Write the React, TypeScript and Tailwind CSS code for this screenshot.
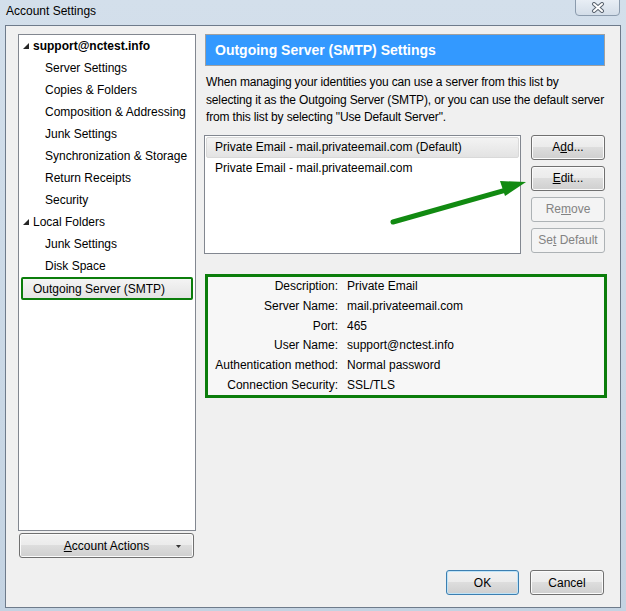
import type { ReactNode } from 'react';

const FONT = { fontFamily: '"Liberation Sans", Arial, sans-serif' };

const treeItems = [
  { label: 'Server Settings', level: 1 },
  { label: 'Copies & Folders', level: 1 },
  { label: 'Composition & Addressing', level: 1 },
  { label: 'Junk Settings', level: 1 },
  { label: 'Synchronization & Storage', level: 1 },
  { label: 'Return Receipts', level: 1 },
  { label: 'Security', level: 1 },
];

const details = [
  ['Description:', 'Private Email'],
  ['Server Name:', 'mail.privateemail.com'],
  ['Port:', '465'],
  ['User Name:', 'support@nctest.info'],
  ['Authentication method:', 'Normal password'],
  ['Connection Security:', 'SSL/TLS'],
];

function Expander() {
  return (
    <svg width="6" height="6" viewBox="0 0 6 6" className="shrink-0">
      <polygon points="6,0 6,6 0,6" fill="#262626" />
    </svg>
  );
}

function WinButton({
  children,
  disabled,
  focused,
  className = '',
}: {
  children: ReactNode;
  disabled?: boolean;
  focused?: boolean;
  className?: string;
}) {
  if (disabled) {
    return (
      <div
        className={`flex h-[25px] items-center justify-center rounded-[3px] border border-[#adb2b5] bg-[#f4f4f4] text-[12px] text-[#838383] ${className}`}
      >
        {children}
      </div>
    );
  }
  return (
    <div
      className={`flex h-[25px] items-center justify-center rounded-[3px] border ${
        focused ? 'border-[#3c7fb1] shadow-[inset_0_0_0_1px_#bfe3f7]' : 'border-[#707070] shadow-[inset_0_0_0_1px_#fbfbfb]'
      } bg-[linear-gradient(to_bottom,#f2f2f2_0%,#ebebeb_50%,#dddddd_50%,#cfcfcf_100%)] text-[12px] text-black ${className}`}
    >
      {children}
    </div>
  );
}

export default function App() {
  return (
    <div
      className="relative flex h-[611px] w-[626px] flex-col overflow-hidden bg-[linear-gradient(to_bottom,#d3dfeb,#c4d3e2)] text-black"
      style={FONT}
    >
      {/* title bar */}
      <div className="flex h-[25px] shrink-0 items-start justify-between pl-[6px] pr-[6px]">
        <span className="mt-[3px] text-[12px] leading-[16px]">Account Settings</span>
        <div className="-mt-px flex h-[17px] w-[45px] items-center justify-center rounded-b-[4px] border border-[#8b9bad] bg-[linear-gradient(to_bottom,#e8eef5,#d3dde8)]">
          <svg width="14" height="11" viewBox="0 0 14 11">
            <path d="M3 2 L11 9 M11 2 L3 9" stroke="#5a6470" strokeWidth="4" strokeLinecap="round" />
            <path d="M3 2 L11 9 M11 2 L3 9" stroke="#ffffff" strokeWidth="2" strokeLinecap="round" />
          </svg>
        </div>
      </div>

      {/* client area */}
      <div className="mx-[5px] mb-[3px] flex flex-1 flex-col border border-[#6e7b8b] bg-[#f0f0f0] pl-[12px] pr-[13px] pt-[8px] pb-[12px]">
        <div className="flex gap-[8px]">
          {/* left column */}
          <div className="flex w-[178px] shrink-0 flex-col">
            <div className="flex h-[497px] flex-col border border-[#828790] bg-white text-[12px]">
              <div className="flex h-[22px] items-center gap-[4px] pl-[4px] font-bold">
                <Expander />
                <span>support@nctest.info</span>
              </div>
              {treeItems.map((item) => (
                <div key={item.label} className="flex h-[22px] items-center pl-[26px]">
                  {item.label}
                </div>
              ))}
              <div className="flex h-[22px] items-center gap-[4px] pl-[4px]">
                <Expander />
                <span>Local Folders</span>
              </div>
              <div className="flex h-[22px] items-center pl-[26px]">Junk Settings</div>
              <div className="flex h-[22px] items-center pl-[26px]">Disk Space</div>
              <div className="mx-[2px] flex h-[23px] items-center rounded-[2px] border-[2px] border-[#0b7d0b] bg-[linear-gradient(to_bottom,#f4f4f4,#e4e4e4)] pl-[10px]">
                Outgoing Server (SMTP)
              </div>
            </div>
            <WinButton className="relative ml-px mt-[2px] w-[175px]">
              <span>
                <span className="underline">A</span>ccount Actions
              </span>
              <svg width="5" height="3" viewBox="0 0 5 3" className="absolute right-[12px] top-[11px]">
                <polygon points="0,0 5,0 2.5,3" fill="#333" />
              </svg>
            </WinButton>
          </div>

          {/* right column */}
          <div className="flex w-[403px] shrink-0 flex-col">
            <div className="ml-px flex h-[32px] w-[400px] items-center border border-[#a0a0a0] bg-[#3399ff] pl-[9px] text-[14px] font-bold text-white">
              Outgoing Server (SMTP) Settings
            </div>
            <p className="mt-[8px] whitespace-nowrap pl-[2px] text-[12px] leading-[17.5px] tracking-[-0.15px]">
              When managing your identities you can use a server from this list by
              <br />
              selecting it as the Outgoing Server (SMTP), or you can use the default server
              <br />
              from this list by selecting "Use Default Server".
            </p>
            <div className="mt-[8px] flex">
              <div className="flex h-[119px] w-[317px] flex-col border border-[#828790] bg-white p-px text-[12px]">
                <div className="flex h-[21px] items-center rounded-[2px] border border-[#d9d9d9] bg-[linear-gradient(to_bottom,#f3f3f3,#e3e3e3)] pl-[8px]">
                  Private Email - mail.privateemail.com (Default)
                </div>
                <div className="flex h-[21px] items-center pl-[9px]">Private Email - mail.privateemail.com</div>
              </div>
              <div className="ml-[10px] flex w-[74px] flex-col gap-[6px]">
                <WinButton>
                  <span>
                    A<span className="underline">d</span>d...
                  </span>
                </WinButton>
                <WinButton>
                  <span>
                    <span className="underline">E</span>dit...
                  </span>
                </WinButton>
                <WinButton disabled>
                  <span>
                    Re<span className="underline">m</span>ove
                  </span>
                </WinButton>
                <WinButton disabled>
                  <span>
                    Se<span className="underline">t</span> Default
                  </span>
                </WinButton>
              </div>
            </div>
            <div className="ml-px mt-[20px] flex h-[124px] w-[402px] flex-col justify-center border-[3px] border-[#0b7d0b] bg-[#f7f7f7] text-[12px]">
              {details.map(([label, value]) => (
                <div key={label} className="flex h-[19.8px] items-center">
                  <span className="w-[130px] text-right">{label}</span>
                  <span className="ml-[9px]">{value}</span>
                </div>
              ))}
            </div>
          </div>
        </div>

        <div className="mr-[3px] mt-auto flex justify-end gap-[11px]">
          <WinButton focused className="w-[73px]">
            OK
          </WinButton>
          <WinButton className="w-[74px]">Cancel</WinButton>
        </div>
      </div>

      {/* annotation arrow */}
      <svg className="pointer-events-none absolute left-0 top-0" width="626" height="611" viewBox="0 0 626 611">
        <line x1="393" y1="222" x2="510" y2="189" stroke="#118a11" strokeWidth="5" strokeLinecap="round" />
        <polygon points="500,181 526,182 505,196" fill="#118a11" />
      </svg>
    </div>
  );
}
